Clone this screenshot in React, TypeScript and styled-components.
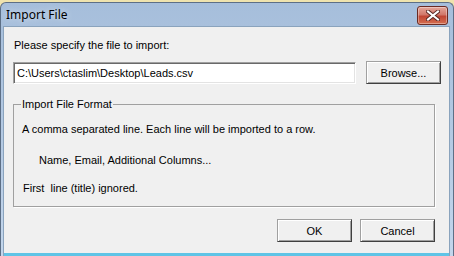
import React from "react"
import styled, { createGlobalStyle } from "styled-components"

const Global = createGlobalStyle`
  html, body {
    margin: 0;
    padding: 0;
    background: #efe3ae;
  }
`

const Desktop = styled.div`
  width: 454px;
  height: 256px;
  padding-top: 2px;
  box-sizing: border-box;
  overflow: hidden;
  background: #efe3ae;
`

const Window = styled.div`
  display: flex;
  flex-direction: column;
  height: 254px;
  width: 454px;
  box-sizing: border-box;
  border: 1px solid #5d6f86;
  border-bottom: none;
  border-radius: 6px 6px 0 0;
  background: linear-gradient(to bottom, #a6bedb 0%, #b6cbe4 60%, #c3d6ec 100%);
  overflow: hidden;
`

const TitleBar = styled.div`
  display: flex;
  align-items: center;
  justify-content: space-between;
  height: 23px;
  padding: 0 5px 0 5px;
`

const Title = styled.span`
  font-family: "Noto Sans", "Open Sans", sans-serif;
  font-size: 12px;
  color: #000;
  text-shadow: 0 0 6px rgba(255, 255, 255, 0.7);
`

const CloseButton = styled.div`
  display: flex;
  align-items: center;
  justify-content: center;
  width: 29px;
  height: 17px;
  margin-top: 1px;
  border: 1px solid #6a2a22;
  border-radius: 3px;
  background: linear-gradient(to bottom, #e4a79a 0%, #d1786a 45%, #c04634 55%, #d46e50 100%);
  box-shadow: inset 0 0 0 1px rgba(255, 255, 255, 0.35);
`

const Frame = styled.div`
  flex: 1;
  display: flex;
  margin: 0 3px 0 2px;
  border: 1px solid #8aa3bd;
  border-bottom: none;
`

const Client = styled.div`
  flex: 1;
  display: flex;
  flex-direction: column;
  background: #f0f0f0;
  padding: 12px 6px 0 9px;
  font-family: "Liberation Sans", Arial, sans-serif;
  font-size: 11px;
  color: #000;
  border-bottom: 3px solid #5fc4e6;
`

const Label = styled.div`
  height: 13px;
  line-height: 13px;
  margin-left: 1px;
`

const FileRow = styled.div`
  display: flex;
  align-items: center;
  margin-top: 9px;
  gap: 10px;
`

const PathInput = styled.input`
  width: 343px;
  height: 22px;
  box-sizing: border-box;
  margin: 0;
  padding: 1px 3px 0;
  border: 1px solid;
  border-color: #a0a0a0 #fff #fff #a0a0a0;
  box-shadow: inset 1px 1px 0 #696969, inset -1px -1px 0 #e3e3e3;
  background: #fff;
  font-family: "Liberation Sans", Arial, sans-serif;
  font-size: 11px;
  color: #000;
  outline: none;
`

const Button = styled.button<{ $w?: number }>`
  width: ${(p) => p.$w ?? 75}px;
  height: 23px;
  box-sizing: border-box;
  margin: 0;
  padding: 0;
  border: 1px solid;
  border-color: #a0a0a0 #404040 #404040 #a0a0a0;
  box-shadow: inset 1px 1px 0 #fff, inset -1px -1px 0 #a0a0a0;
  background: #f0f0f0;
  font-family: "Liberation Sans", Arial, sans-serif;
  font-size: 11px;
  color: #000;
  cursor: default;
`

const Group = styled.fieldset`
  margin: 14px 8px 0 0;
  padding: 0 0 0 8px;
  height: 109px;
  box-sizing: border-box;
  border: 1px solid #a0a0a0;
  box-shadow: 1px 1px 0 #fff;
  min-width: 0;
`

const Legend = styled.legend`
  padding: 0 1px;
  margin-left: -1px;
  line-height: 13px;
`

const Line = styled.div<{ $indent?: number; $gap?: number }>`
  margin-left: ${(p) => p.$indent ?? 0}px;
  margin-top: ${(p) => p.$gap ?? 0}px;
  line-height: 13px;
  white-space: pre;
`

const Footer = styled.div`
  display: flex;
  justify-content: flex-end;
  gap: 8px;
  margin-top: 12px;
  margin-right: 8px;
`

const CloseIcon = () => (
  <svg width="14" height="11" viewBox="0 0 14 11">
    <path
      d="M2 1.5 L12 9.5 M12 1.5 L2 9.5"
      stroke="#5a2a25"
      strokeWidth="4"
      strokeLinecap="square"
    />
    <path
      d="M2 1.5 L12 9.5 M12 1.5 L2 9.5"
      stroke="#fff"
      strokeWidth="2"
      strokeLinecap="square"
    />
  </svg>
)

export default function App() {
  return (
    <>
      <Global />
      <Desktop>
        <Window>
          <TitleBar>
            <Title>Import File</Title>
            <CloseButton>
              <CloseIcon />
            </CloseButton>
          </TitleBar>
          <Frame>
            <Client>
              <Label>Please specify the file to import:</Label>
              <FileRow>
                <PathInput readOnly defaultValue="C:\Users\ctaslim\Desktop\Leads.csv" />
                <Button>Browse...</Button>
              </FileRow>
              <Group>
                <Legend>Import File Format</Legend>
                <Line $gap={12}>A comma separated line. Each line will be imported to a row.</Line>
                <Line $indent={17} $gap={18}>Name, Email, Additional Columns...</Line>
                <Line $indent={1} $gap={15}>First  line (title) ignored.</Line>
              </Group>
              <Footer>
                <Button>OK</Button>
                <Button>Cancel</Button>
              </Footer>
            </Client>
          </Frame>
        </Window>
      </Desktop>
    </>
  )
}
